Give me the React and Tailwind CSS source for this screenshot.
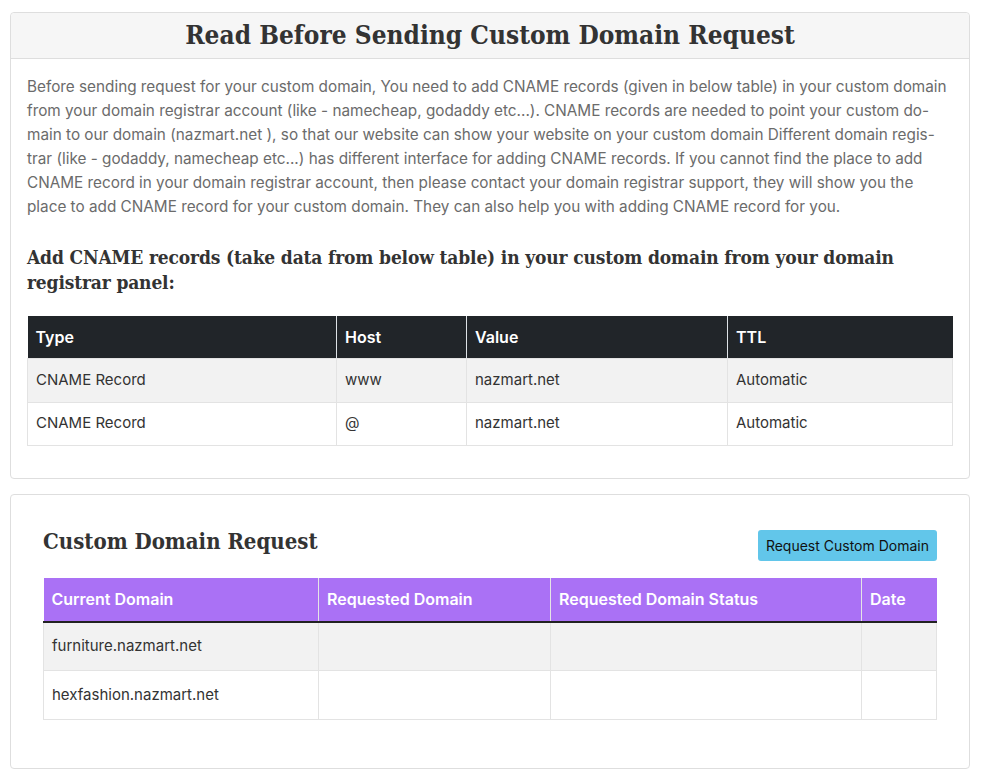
export default function App() {
  const sans = { fontFamily: "Inter, 'Noto Sans', sans-serif" };
  const serif = { fontFamily: "'DejaVu Serif', serif", fontStretch: "condensed" };
  const lines = [
    "Before sending request for your custom domain, You need to add CNAME records (given in below table) in your custom domain",
    "from your domain registrar account (like - namecheap, godaddy etc...). CNAME records are needed to point your custom do-",
    "main to our domain (nazmart.net ), so that our website can show your website on your custom domain Different domain regis-",
    "trar (like - godaddy, namecheap etc...) has different interface for adding CNAME records. If you cannot find the place to add",
    "CNAME record in your domain registrar account, then please contact your domain registrar support, they will show you the",
    "place to add CNAME record for your custom domain. They can also help you with adding CNAME record for you.",
  ];
  return (
    <div className="bg-white min-h-[781px] pl-[10px] pr-[14px] pt-[12px] text-[#333]" style={sans}>
      <div className="border border-[#dedede] rounded-[4px] bg-white">
        <div className="bg-[#f6f6f6] border-b border-[#dedede] h-[46px] flex items-center justify-center rounded-t-[4px]">
          <h2 className="text-[26px] font-semibold text-[#333]" style={serif}>
            Read Before Sending Custom Domain Request
          </h2>
        </div>
        <div className="px-[16px] pt-[16px] pb-[32px]">
          <p className="text-[15.3px] leading-[24px] text-[#6b6b6b]">
            {lines.map((l, i) => (
              <span key={i} className="block whitespace-nowrap">{l}</span>
            ))}
          </p>
          <h4 className="mt-[26px] text-[19px] leading-[25px] font-bold text-[#333] tracking-[-0.15px]" style={serif}>
            Add CNAME records (take data from below table) in your custom domain from your domain registrar panel:
          </h4>
          <table className="mt-[21px] w-full border-collapse text-[15px]">
            <thead>
              <tr className="bg-[#212529] text-white h-[42px] text-[16px]">
                <th className="text-left font-semibold px-[8px] w-[309px] border-r border-[#dee2e6]">Type</th>
                <th className="text-left font-semibold px-[8px] w-[130px] border-r border-[#dee2e6]">Host</th>
                <th className="text-left font-semibold px-[8px] w-[261px] border-r border-[#dee2e6]">Value</th>
                <th className="text-left font-semibold px-[8px]">TTL</th>
              </tr>
            </thead>
            <tbody className="text-[#333]">
              <tr className="bg-[#f2f2f2] h-[44px]">
                <td className="px-[8px] border border-[#e3e3e3]">CNAME Record</td>
                <td className="px-[8px] border border-[#e3e3e3]">www</td>
                <td className="px-[8px] border border-[#e3e3e3]">nazmart.net</td>
                <td className="px-[8px] border border-[#e3e3e3]">Automatic</td>
              </tr>
              <tr className="bg-white h-[43px]">
                <td className="px-[8px] border border-[#e3e3e3]">CNAME Record</td>
                <td className="px-[8px] border border-[#e3e3e3]">@</td>
                <td className="px-[8px] border border-[#e3e3e3]">nazmart.net</td>
                <td className="px-[8px] border border-[#e3e3e3]">Automatic</td>
              </tr>
            </tbody>
          </table>
        </div>
      </div>

      <div className="mt-[15px] border border-[#dedede] rounded-[4px] bg-white px-[32px] pt-[34px] pb-[48px]">
        <div className="flex items-center justify-between h-[33px]">
          <h3 className="text-[22px] font-semibold text-[#333] pb-[8px]" style={serif}>
            Custom Domain Request
          </h3>
          <button className="bg-[#62c6ea] text-[#111] text-[14px] rounded-[3px] h-[31px] px-[8px]">
            Request Custom Domain
          </button>
        </div>
        <table className="mt-[16px] w-full border-collapse text-[15px]">
          <thead>
            <tr className="bg-[#aa71f5] text-white h-[44px] text-[16px]">
              <th className="text-left font-semibold px-[8px] w-[275px] border-r border-[#e5e5e5] border-b-2 border-b-[#222]">Current Domain</th>
              <th className="text-left font-semibold px-[8px] w-[232px] border-r border-[#e5e5e5] border-b-2 border-b-[#222]">Requested Domain</th>
              <th className="text-left font-semibold px-[8px] w-[311px] border-r border-[#e5e5e5] border-b-2 border-b-[#222]">Requested Domain Status</th>
              <th className="text-left font-semibold px-[8px] border-b-2 border-b-[#222]">Date</th>
            </tr>
          </thead>
          <tbody className="text-[#333]">
            <tr className="bg-[#f2f2f2] h-[49px]">
              <td className="px-[8px] border border-[#e3e3e3]">furniture.nazmart.net</td>
              <td className="px-[8px] border border-[#e3e3e3]"></td>
              <td className="px-[8px] border border-[#e3e3e3]"></td>
              <td className="px-[8px] border border-[#e3e3e3]"></td>
            </tr>
            <tr className="bg-white h-[49px]">
              <td className="px-[8px] border border-[#e3e3e3]">hexfashion.nazmart.net</td>
              <td className="px-[8px] border border-[#e3e3e3]"></td>
              <td className="px-[8px] border border-[#e3e3e3]"></td>
              <td className="px-[8px] border border-[#e3e3e3]"></td>
            </tr>
          </tbody>
        </table>
      </div>
    </div>
  );
}
